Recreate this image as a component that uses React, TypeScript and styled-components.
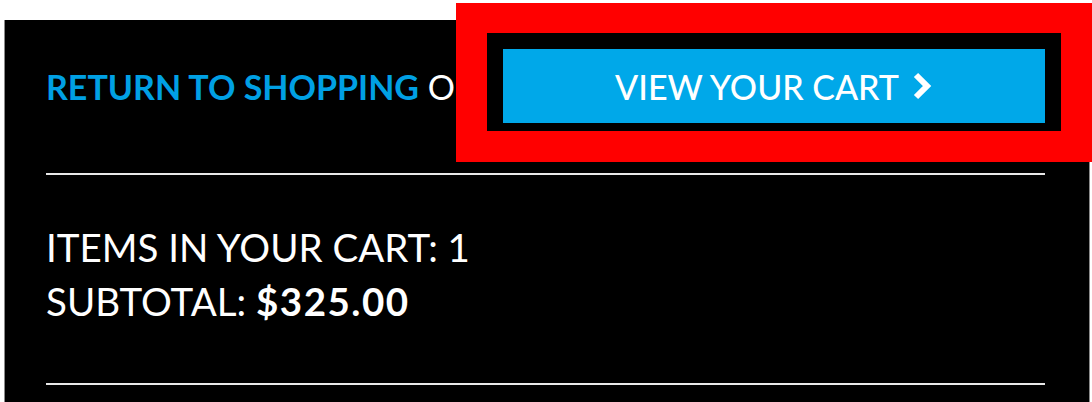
import * as React from "react"
import styled, { createGlobalStyle } from "styled-components"

const GlobalStyle = createGlobalStyle`
  body {
    margin: 0;
    background: #fff;
    font-family: Lato, "Liberation Sans", sans-serif;
  }
`

const Panel = styled.div`
  margin: 20px 0 0 4px;
  width: 1086px;
  height: 382px;
  box-sizing: border-box;
  background: #000;
  border-left: 1px solid #8a8a8a;
  border-right: 1px solid #8a8a8a;
  padding: 29px 44px 0 41px;
  color: #fff;
`

const TopRow = styled.div`
  display: flex;
  align-items: center;
  justify-content: space-between;
  padding-bottom: 50px;
`

const ReturnText = styled.div`
  font-size: 34px;
  white-space: nowrap;
  overflow: hidden;
  width: 440px;
`

const ReturnLink = styled.a`
  color: #00a0e4;
  font-weight: 700;
  text-decoration: none;
`

const ButtonWrap = styled.div`
  position: relative;
`

const CartButton = styled.button`
  display: flex;
  align-items: center;
  justify-content: center;
  gap: 12px;
  width: 542px;
  height: 74px;
  border: none;
  background: #00a8e9;
  color: #fff;
  font-family: inherit;
  font-size: 34px;
  font-weight: 500;
  cursor: pointer;
`

// red annotation frame drawn over the button area
const Highlight = styled.div`
  position: absolute;
  top: -46px;
  bottom: -39px;
  left: -47px;
  right: -47px;
  border: 31px solid #ff0000;
  border-top-width: 30px;
  box-sizing: border-box;
  background: transparent;
  pointer-events: none;
`

const Rule = styled.hr`
  margin: 0;
  border: none;
  height: 2px;
  background: #e8e8e8;
`

const Summary = styled.div`
  padding: 45px 0 55px;
  font-size: 38.5px;
  line-height: 54px;
`

const Strong = styled.strong`
  font-weight: 700;
  letter-spacing: 1.5px;
`

const Chevron = () => (
  <svg width="22" height="28" viewBox="0 0 22 28">
    <polyline points="5,3 16,14 5,25" fill="none" stroke="#fff" strokeWidth="6" />
  </svg>
)

export default function App() {
  return (
    <>
      <GlobalStyle />
      <Panel>
        <TopRow>
          <ReturnText>
            <ReturnLink href="#">RETURN TO SHOPPING</ReturnLink> OR
          </ReturnText>
          <ButtonWrap>
            <CartButton>
              VIEW YOUR CART <Chevron />
            </CartButton>
            <Highlight />
          </ButtonWrap>
        </TopRow>
        <Rule />
        <Summary>
          <div>ITEMS IN YOUR CART: 1</div>
          <div>
            SUBTOTAL: <Strong>$325.00</Strong>
          </div>
        </Summary>
        <Rule />
      </Panel>
    </>
  )
}
